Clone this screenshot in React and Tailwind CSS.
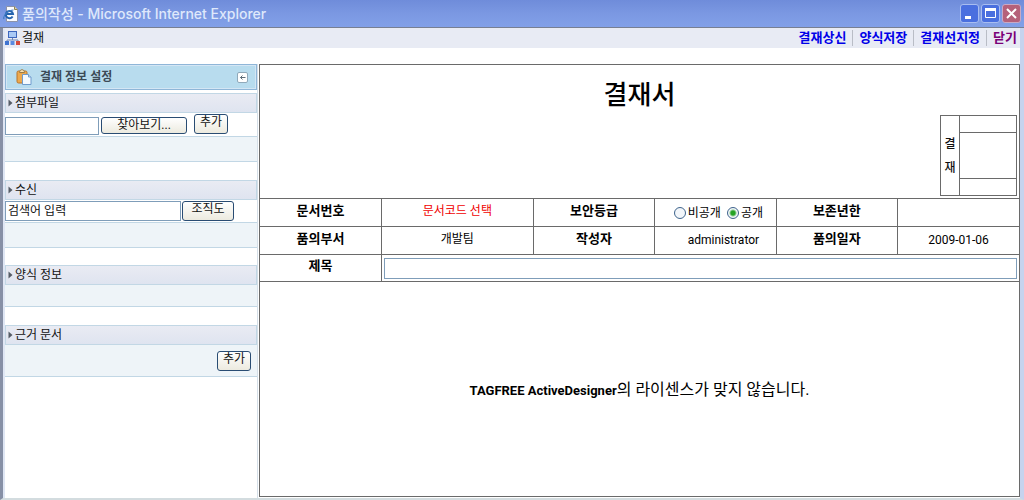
import React, { useState } from 'react';

const TOOLBAR_LINKS = ['결재상신', '양식저장', '결재선지정'];

// --- ICONS ---
function PageIcon() {
  return (
    <svg width="16" height="16" viewBox="0 0 16 16" aria-hidden="true">
      <path d="M3.500 .5h8l3 3v12h-11z" fill="#fbfcff" stroke="#8d93a8" />
      <path d="M11.500 .5v3h3" fill="#e8d9a0" stroke="#8d8458" />
      <path d="M9.600 10.400A3.600 3.600 0 1 1 10 8H4" fill="none" stroke="#2563ae" strokeWidth="2" />
      <path d="M1 13C-.5 10 5 4 10.500 4" fill="none" stroke="#3f7cc4" strokeWidth="1.200" />
    </svg>
  );
}

function NetworkIcon() {
  return (
    <svg width="15" height="14" viewBox="0 0 15 14" aria-hidden="true">
      <rect x="3.500" y=".5" width="8" height="6" fill="#a9c9f5" stroke="#3d66bd" />
      <path d="M7.500 7v2M2 11V9h11v2" fill="none" stroke="#6f86b5" />
      <rect x="0" y="10" width="4" height="4" fill="#3f74d1" />
      <rect x="5.500" y="10" width="4" height="4" fill="#5a8ae0" />
      <rect x="11" y="10" width="4" height="4" fill="#d64b3c" />
    </svg>
  );
}

function ClipboardIcon() {
  return (
    <svg width="16" height="16" viewBox="0 0 16 16" aria-hidden="true">
      <rect x="1" y="2" width="10" height="12" rx="1.500" fill="#eda94e" stroke="#b8742a" />
      <path d="M3.500 3.500C3.500 1.500 5 .7 6 .7s2.500.8 2.500 2.800z" fill="#f6e2b8" stroke="#9b7b45" />
      <path d="M6.500 5.500h6l2.500 2.500v7.500H6.500z" fill="#f5faff" stroke="#6f9ccd" />
      <path d="M12.500 5.500V8H15" fill="#cfe2f5" stroke="#6f9ccd" />
    </svg>
  );
}

function WindowButton({ label, className, children }) {
  return (
    <button
      type="button"
      aria-label={label}
      className={`flex size-[19px] items-center justify-center rounded-[3px] border ${className}`}
    >
      <svg width="13" height="13" viewBox="0 0 13 13" fill="none" stroke="#fff" aria-hidden="true">
        {children}
      </svg>
    </button>
  );
}

// --- SIDEBAR PARTS ---
function SectionTitle({ children }) {
  return (
    <h2 className="flex h-5 items-center gap-0.5 border border-[#c2d7e5] bg-linear-to-b from-[#e9ebf3] to-[#dfe4f0] px-0.5 text-[12px] leading-4">
      <svg width="5" height="8" viewBox="0 0 5 8" aria-hidden="true">
        <path d="M.5 .5L4.500 4L.5 7.500z" fill="#555c66" />
      </svg>
      {children}
    </h2>
  );
}

function XpButton({ className, children }) {
  return (
    <button
      type="button"
      className={`flex justify-center rounded-[3px] border border-[#294c73] bg-linear-to-b from-white to-[#eceadf] text-[12px] leading-[15px] ${className}`}
    >
      {children}
    </button>
  );
}

// --- FORM CELLS ---
function HeadCell({ children }) {
  return (
    <th scope="row" className="border border-l-0 border-[#6a6a6a] pb-1 text-[13px] leading-5 font-bold">
      {children}
    </th>
  );
}

function DataCell({ className = '', children, ...rest }) {
  return (
    <td className={`border border-[#6a6a6a] text-center text-[12px] last:border-r-0 ${className}`} {...rest}>
      {children}
    </td>
  );
}

export default function App() {
  const [security, setSecurity] = useState('open');
  const [keyword, setKeyword] = useState('검색어 입력');

  const radioClass =
    'size-3 shrink-0 appearance-none rounded-full border border-[#3f648c] bg-[#f2f6fa] checked:bg-[radial-gradient(circle,#25a325_0_2px,#f2f6fa_4px)]';

  return (
    <div className="flex min-h-screen flex-col bg-white font-[Roboto,'Noto_Sans_CJK_KR',sans-serif] text-[12px] text-[#111]">
      <header className="flex h-7 items-center gap-[3px] border-b border-[#777f92] bg-linear-to-b from-[#6f8cda] via-[#7b98e2] to-[#82a0e8] pr-[3px] pl-[3px]">
        <PageIcon />
        <h1 className="grow font-[Inter,'Noto_Sans_CJK_KR',sans-serif] text-[14px] leading-5 font-medium text-[#dfe8fb]">
          품의작성 - Microsoft Internet Explorer
        </h1>
        <div className="flex gap-0.5">
          <WindowButton label="최소화" className="border-[#a9bdf0] bg-[#4a6fdf]">
            <path d="M2 10.500h6" strokeWidth="3" />
          </WindowButton>
          <WindowButton label="최대화" className="border-[#a9bdf0] bg-[#4a6fdf]">
            <path d="M1.500 2.500h10v8h-10z" />
            <path d="M1 2.500h11" strokeWidth="3" />
          </WindowButton>
          <WindowButton label="창 닫기" className="border-[#c9a9c4] bg-[#b5617a]">
            <path d="M2 2l9 9M11 2l-9 9" strokeWidth="2" />
          </WindowButton>
        </div>
      </header>

      <div className="flex grow flex-col border-r-4 border-b-2 border-l-[3px] border-r-[#c6d3ee] border-b-[#d3dcdf] border-l-[#8790a6]">
        <div className="flex h-5 items-center border-l-2 border-[#dfe6f4] bg-[#e8ebf4]">
          <NetworkIcon />
          <span className="grow pl-0.5 text-[12px] leading-4">결재</span>
          <nav className="flex items-center pr-[3px] text-[13px] leading-4 font-bold">
            {TOOLBAR_LINKS.map((label) => (
              <a key={label} href="#" className="mr-1.5 border-r border-[#b9bdc6] pr-1.5 text-[#0000e8]">
                {label}
              </a>
            ))}
            <a href="#" className="text-[#7a0078]">닫기</a>
          </nav>
        </div>

        <div className="flex grow border-l-2 border-[#dfe6f4] pt-4">
          <aside className="flex w-[253px] shrink-0 flex-col border-r border-[#d5dfe8]">
            <div className="flex h-[26px] items-center gap-2 border border-[#8fb6d8] bg-[#b8dcee] pr-2 pl-2.5 ring-1 ring-[#d4e6f4] ring-inset">
              <ClipboardIcon />
              <span className="grow text-[12px] font-bold text-[#3c4a56]">결재 정보 설정</span>
              <button
                type="button"
                aria-label="접기"
                className="flex size-[11px] items-center justify-center rounded-[2px] border border-[#8fa9ba] bg-white"
              >
                <svg width="7" height="7" viewBox="0 0 7 7" fill="none" stroke="#5c6b76" aria-hidden="true">
                  <path d="M6.500 3.500H1.500M3.500 1.500l-2 2l2 2" />
                </svg>
              </button>
            </div>

            <section className="mt-[3px]">
              <SectionTitle>첨부파일</SectionTitle>
              <div className="flex h-6 items-start border-b border-[#c2d7e5]">
                <input
                  type="text"
                  aria-label="첨부파일 경로"
                  className="mt-1 mr-0.5 h-[18px] w-[94px] border border-[#7f9db9] px-0.5"
                />
                <XpButton className="mt-1 h-[17px] w-[86px]">찾아보기...</XpButton>
                <XpButton className="mt-px ml-[7px] h-5 w-[34px]">추가</XpButton>
              </div>
              <div className="h-[25px] border-b border-[#c2d7e5] bg-[#eef4f8]" />
            </section>

            <section className="mt-[18px]">
              <SectionTitle>수신</SectionTitle>
              <div className="flex h-[23px] items-start border-b border-[#c2d7e5]">
                <input
                  type="text"
                  aria-label="수신 검색어"
                  value={keyword}
                  onChange={(e) => setKeyword(e.target.value)}
                  className="mt-px mr-px h-5 w-[176px] border border-[#7f9db9] px-0.5 pb-1 text-[12px]"
                />
                <XpButton className="mt-px h-5 w-[52px]">조직도</XpButton>
              </div>
              <div className="h-[25px] border-b border-[#c2d7e5] bg-[#eef4f8]" />
            </section>

            <section className="mt-[17px]">
              <SectionTitle>양식 정보</SectionTitle>
              <div className="h-[22px] border-b border-[#c2d7e5] bg-[#eef4f8]" />
            </section>

            <section className="mt-[18px]">
              <SectionTitle>근거 문서</SectionTitle>
              <div className="flex h-8 justify-end border-b border-[#c2d7e5] bg-[#eef4f8] pt-1.5 pr-1.5">
                <XpButton className="h-5 w-[34px]">추가</XpButton>
              </div>
            </section>
          </aside>

          <main className="mb-px ml-px flex grow flex-col border border-[#6a6a6a]">
            <div className="grid grid-cols-[77px_1fr_77px] px-0.5 pt-4">
              <h2 className="col-start-2 text-center text-[26px] leading-7 font-medium text-black">결재서</h2>
              <table className="col-start-3 mt-[34px] mb-0.5 h-[81px] w-[77px] table-fixed border-collapse">
                <tbody>
                  <tr className="h-[17px]">
                    <th scope="rowgroup" rowSpan={3} className="w-[19px] border border-[#6a6a6a] text-[12px] leading-6 font-medium">
                      결<br />재
                    </th>
                    <td className="border border-[#6a6a6a]" />
                  </tr>
                  <tr className="h-[46px]">
                    <td className="border border-[#6a6a6a]" />
                  </tr>
                  <tr className="h-[17px]">
                    <td className="border border-[#6a6a6a]" />
                  </tr>
                </tbody>
              </table>
            </div>

            <table className="w-full table-fixed border-collapse text-black">
              <colgroup>
                <col className="w-[16%]" />
                <col className="w-[20%]" />
                <col className="w-[16%]" />
                <col className="w-[16%]" />
                <col className="w-[16%]" />
                <col className="w-[16%]" />
              </colgroup>
              <tbody>
                <tr className="h-7">
                  <HeadCell>문서번호</HeadCell>
                  <DataCell className="pb-1 text-[#f00000]">문서코드 선택</DataCell>
                  <HeadCell>보안등급</HeadCell>
                  <DataCell>
                    <div className="flex items-center justify-center gap-1.5 pl-1.5">
                      <label className="flex items-center gap-0.5">
                        <input
                          type="radio"
                          name="security"
                          checked={security === 'closed'}
                          onChange={() => setSecurity('closed')}
                          className={radioClass}
                        />
                        비공개
                      </label>
                      <label className="flex items-center gap-0.5">
                        <input
                          type="radio"
                          name="security"
                          checked={security === 'open'}
                          onChange={() => setSecurity('open')}
                          className={radioClass}
                        />
                        공개
                      </label>
                    </div>
                  </DataCell>
                  <HeadCell>보존년한</HeadCell>
                  <DataCell />
                </tr>
                <tr className="h-7">
                  <HeadCell>품의부서</HeadCell>
                  <DataCell className="pb-1">개발팀</DataCell>
                  <HeadCell>작성자</HeadCell>
                  <DataCell className="pb-0.5 pl-4">administrator</DataCell>
                  <HeadCell>품의일자</HeadCell>
                  <DataCell className="pb-0.5">2009-01-06</DataCell>
                </tr>
                <tr className="h-[27px]">
                  <HeadCell>
                    <label htmlFor="doc-title">제목</label>
                  </HeadCell>
                  <DataCell colSpan={5} className="px-0.5">
                    <input id="doc-title" type="text" className="block h-[21px] w-full border border-[#7f9db9] px-1" />
                  </DataCell>
                </tr>
              </tbody>
            </table>

            <p className="grow pt-24 text-center text-[16px] leading-6 text-black">
              <b className="text-[13px]">TAGFREE ActiveDesigner</b>의 라이센스가 맞지 않습니다.
            </p>
          </main>
        </div>
      </div>
    </div>
  );
}
